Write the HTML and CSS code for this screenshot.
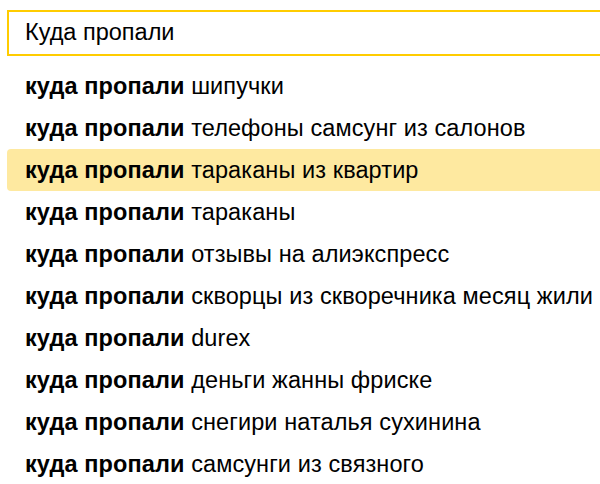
FILE: index.html
```html
<!doctype html>
<html>

	<head>
		<title>Куда пропали</title>
		<meta charset="utf-8" />
		<link rel="stylesheet" href="styles.css">
	</head>

	<body>

		<div class="search">
			<div class="search-input">Куда пропали</div>
			<ul class="suggest">
				<li><b>куда пропали</b> шипучки</li>
				<li><b>куда пропали</b> телефоны самсунг из салонов</li>
				<li class="active"><b>куда пропали</b> тараканы из квартир</li>
				<li><b>куда пропали</b> тараканы</li>
				<li><b>куда пропали</b> отзывы на алиэкспресс</li>
				<li><b>куда пропали</b> скворцы из скворечника месяц жили</li>
				<li><b>куда пропали</b> durex</li>
				<li><b>куда пропали</b> деньги жанны фриске</li>
				<li><b>куда пропали</b> снегири наталья сухинина</li>
				<li><b>куда пропали</b> самсунги из связного</li>
			</ul>
		</div>

	</body>

</html>
```

FILE: styles.css
```css
html,
body {
	margin: 0;
	padding: 0;
	background: #fff;
	overflow: hidden;
}

body {
	font: 23.5px/42px 'Liberation Sans', Arial, sans-serif;
	color: #000;
}

.search {
	width: 640px;
	padding: 10px 0 0 7px;
}

.search-input {
	border: 2px solid #ffcc00;
	height: 42px;
	line-height: 40px;
	padding-left: 16px;
}

.suggest {
	list-style: none;
	margin: 9px 0 0;
	padding: 0;
	letter-spacing: 0.1px;
}

.suggest li {
	height: 42px;
	padding-left: 18px;
	white-space: nowrap;
	border-radius: 4px 0 0 4px;
}

.suggest b {
	font-weight: bold;
}

.suggest .active {
	background: #fee9a0;
}
```
